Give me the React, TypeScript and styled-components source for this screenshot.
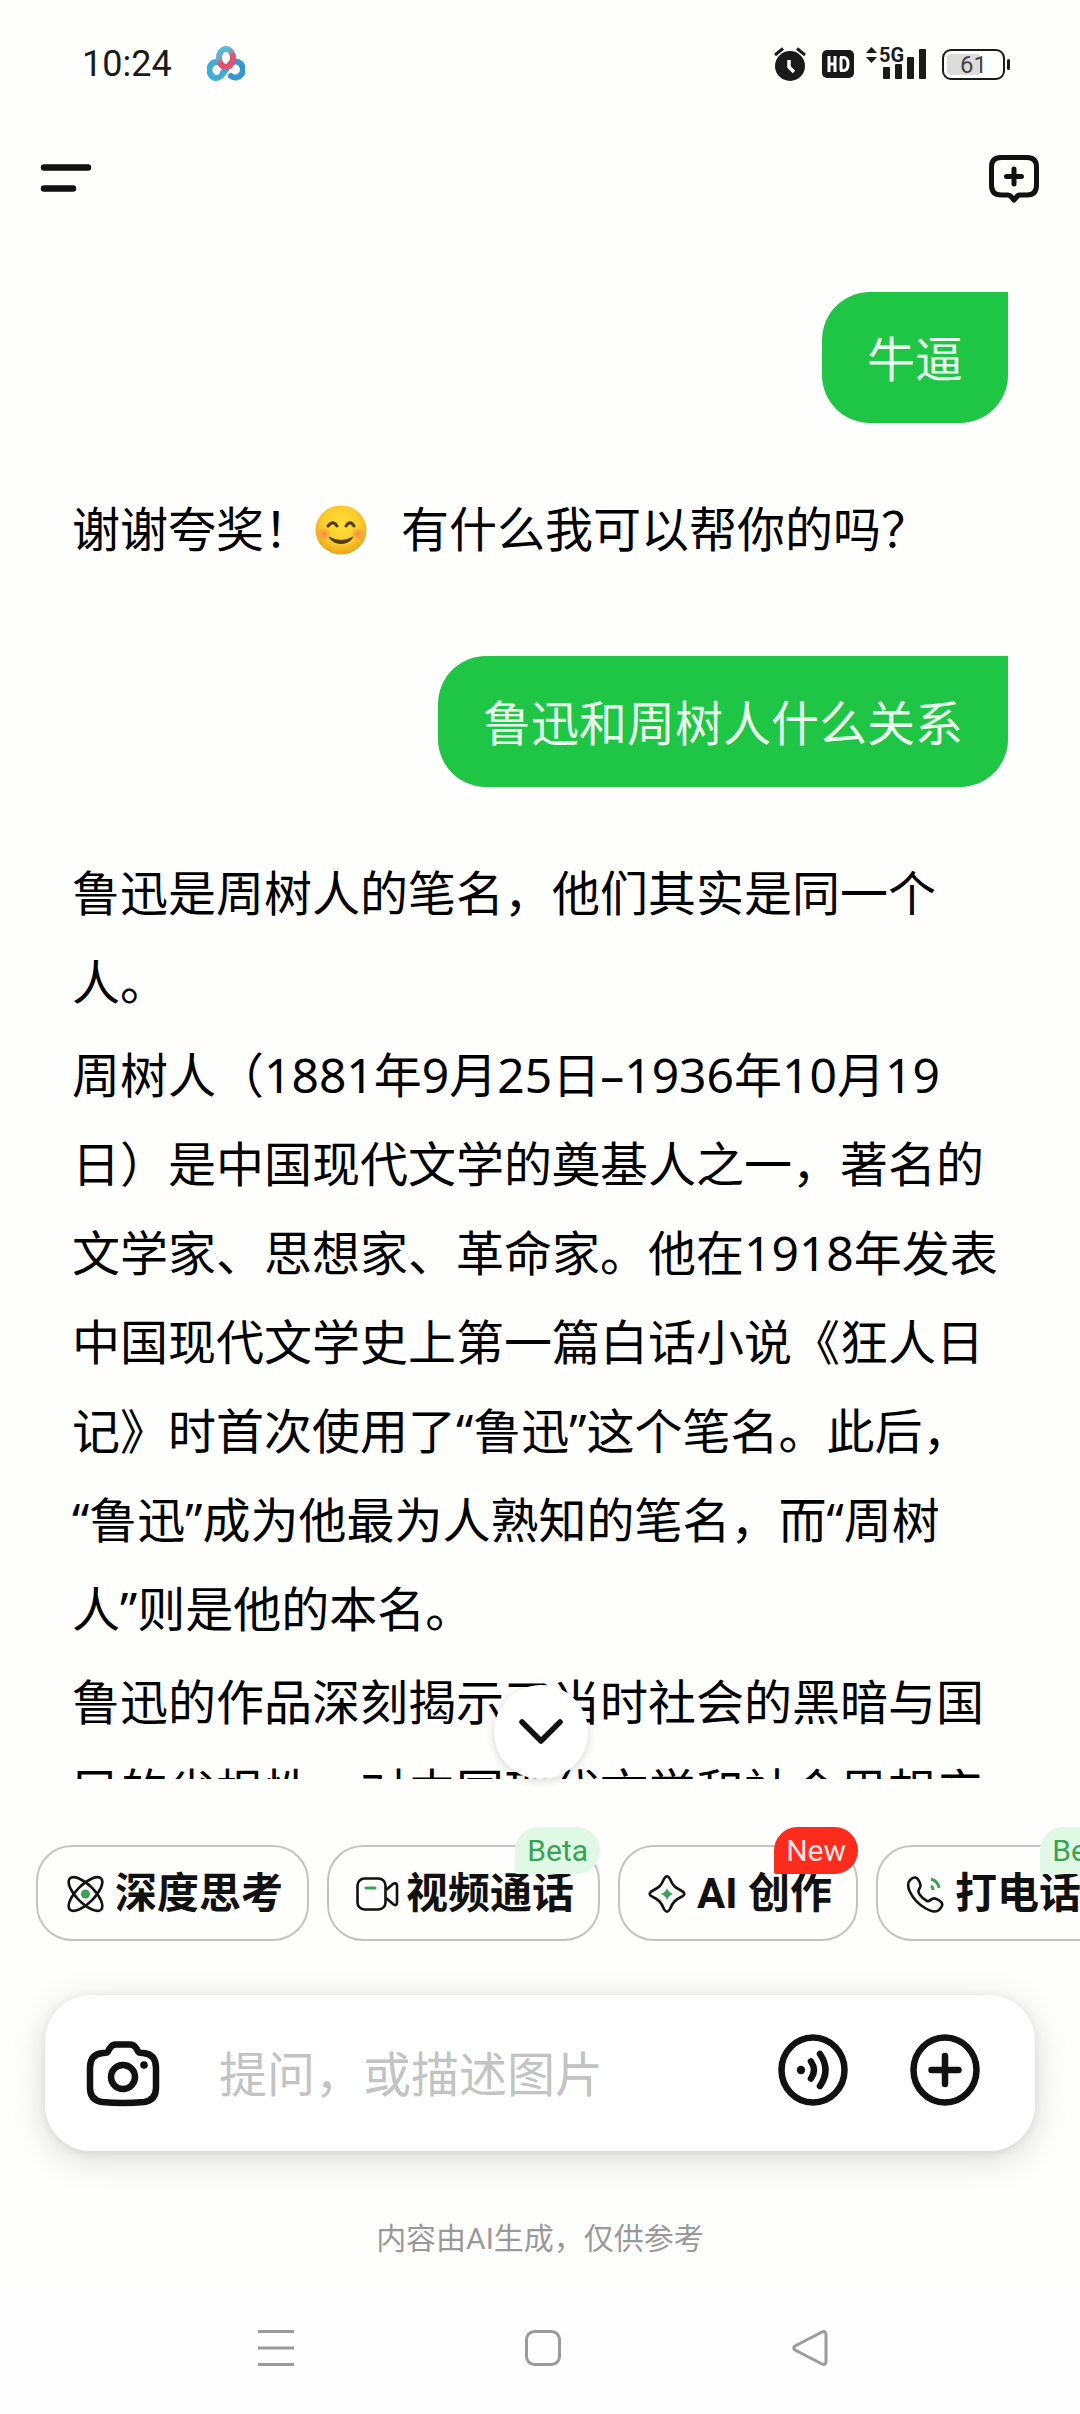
import React from "react";
import styled, { createGlobalStyle } from "styled-components";

const INK = "#111";
const GREEN = "#38a352";

const GlobalStyle = createGlobalStyle`
  *, *::before, *::after { box-sizing: border-box; }
  body {
    margin: 0;
    background: #fefefc;
    color: #000;
    font-family: "Noto Sans", "Noto Sans CJK SC", sans-serif;
    text-spacing-trim: space-all;
  }
  button, input { font: inherit; color: inherit; }
`;

const Page = styled.div`
  display: flex;
  flex-direction: column;
  height: 100vh;
  overflow: hidden;
`;

const StatusBar = styled.header`
  flex: none;
  display: flex;
  align-items: center;
  gap: 35px;
  height: 128px;
  padding: 0 70px 0 82px;
  color: #1a1a1a;
`;

const Clock = styled.time`
  font: 400 36px/48px Roboto, sans-serif;
`;

const StatusIcons = styled.div`
  display: flex;
  align-items: center;
  gap: 16px;
  margin-left: auto;
`;

const Toolbar = styled.nav`
  flex: none;
  display: flex;
  align-items: center;
  justify-content: space-between;
  height: 100px;
  padding: 0 40px;
`;

const IconButton = styled.button`
  flex: none;
  display: grid;
  place-items: center;
  padding: 0;
  border: 0;
  background: none;
  svg { display: block; }
`;

const ChatArea = styled.main`
  position: relative;
  flex: 1;
  min-height: 0;
  display: flex;
`;

const Messages = styled.div`
  flex: 1;
  display: flex;
  flex-direction: column;
  padding: 64px 72px 0;
  overflow: hidden;
`;

const UserBubble = styled.p`
  flex: none;
  align-self: flex-end;
  margin: 0;
  padding: 31px 45px 29px;
  border-radius: 48px 0 48px 48px;
  background: #1fc545;
  color: #e9fdec;
  font-size: 48px;
  line-height: 71px;
`;

const Reply = styled.div`
  flex: none;
  display: flex;
  flex-direction: column;
  gap: 4px;
  padding: 61px 0 83px;
`;

const Paragraph = styled.p`
  margin: 0;
  font-size: 48px;
  line-height: 89px;
`;

const Smile = styled.svg`
  width: 52px;
  height: 50px;
  margin: 0 34px 0 3px;
  vertical-align: -8px;
`;

const ScrollDown = styled.button`
  position: absolute;
  left: 50%;
  bottom: 0;
  display: grid;
  place-items: center;
  width: 94px;
  height: 94px;
  margin-left: -46px;
  padding: 0;
  border: 0;
  border-radius: 50%;
  background: #fff;
  box-shadow: 0 2px 10px rgba(0, 0, 0, 0.16);
`;

const Chips = styled.div`
  flex: none;
  display: flex;
  gap: 18px;
  padding: 66px 0 54px 36px;
  overflow: hidden;
`;

const Chip = styled.button<{ $minWidth?: number }>`
  position: relative;
  flex: none;
  display: flex;
  align-items: center;
  gap: 10px;
  height: 96px;
  min-width: ${(p) => p.$minWidth ?? 0}px;
  padding: 2px 24px 0 27px;
  border: 2px solid #c3c3c3;
  border-radius: 36px;
  background: none;
  color: ${INK};
  font: 700 42px/60px Roboto, "Noto Sans CJK SC", sans-serif;
  white-space: nowrap;
  svg { flex: none; width: 40px; height: 40px; overflow: visible; }
`;

const Badge = styled.span<{ $hot?: boolean }>`
  position: absolute;
  top: -20px;
  right: -2px;
  padding: 0 12px;
  border-radius: 24px 24px 24px 2px;
  background: ${(p) => (p.$hot ? "#fd2b1b" : "#e0f9e5")};
  color: ${(p) => (p.$hot ? "#ffe3e0" : GREEN)};
  font-size: 30px;
  font-weight: 400;
  line-height: 47px;
`;

const Composer = styled.form`
  flex: none;
  display: flex;
  align-items: center;
  height: 156px;
  margin: 0 45px;
  padding: 0 55px 0 40px;
  border-radius: 46px;
  background: #fff;
  box-shadow: 0 8px 36px rgba(0, 0, 0, 0.14), 0 2px 10px rgba(0, 0, 0, 0.08);
`;

const Prompt = styled.input`
  flex: 1;
  min-width: 0;
  height: 80px;
  margin-left: 58px;
  padding: 0;
  border: 0;
  outline: 0;
  background: none;
  font-size: 48px;
  &::placeholder { color: #c3c3c3; opacity: 1; }
`;

const Actions = styled.div`
  display: flex;
  gap: 62px;
  padding-bottom: 6px;
`;

const Disclaimer = styled.p`
  flex: none;
  margin: 0;
  padding: 66px 0 23px;
  color: #999;
  font: 400 30px/44px Roboto, "Noto Sans CJK SC", sans-serif;
  text-align: center;
`;

const SystemNav = styled.nav`
  flex: none;
  display: grid;
  grid-template-columns: repeat(3, 1fr);
  height: 130px;
  padding: 0 136px 2px 142px;
  background: #fefefe;
`;

function CloudIcon() {
  return (
    <svg width="38" height="38" viewBox="0 0 38 38" fill="none" strokeWidth="6">
      <defs>
        <linearGradient id="ring" x1="0" y1="0" x2="0.5" y2="1">
          <stop offset="0" stopColor="#49c3e3" />
          <stop offset="0.45" stopColor="#7aa3c8" />
          <stop offset="0.65" stopColor="#e0526f" />
        </linearGradient>
      </defs>
      <path d="M20 23 L14 31 A7 8 0 1 1 14 19" stroke="#41acd6" />
      <path d="M23 19 A7.500 8 0 1 1 24 31" stroke="#3597cd" strokeLinecap="round" />
      <path d="M20 23 L15 29" stroke="#41a9d8" />
      <ellipse cx="19" cy="13" rx="7" ry="9" stroke="url(#ring)" />
    </svg>
  );
}

function AlarmIcon() {
  return (
    <svg width="32" height="34" viewBox="0 0 32 34">
      <circle cx="16" cy="19" r="15" fill="#1a1a1a" />
      <path d="M1 8 L9 1.500 M31 8 L23 1.500" stroke="#1a1a1a" strokeWidth="3" />
      <path d="M15 13 V20 L20 25" fill="none" stroke="#fff" strokeWidth="3.500" />
    </svg>
  );
}

function HdIcon() {
  return (
    <svg width="32" height="28" viewBox="0 0 32 28">
      <rect width="32" height="28" rx="5" fill="#1a1a1a" />
      <path
        d="M7 6 V22 M13 6 V22 M7 14 H13 M19 7.500 V20.500 M18 7.500 H22 Q26 8 26 14 Q26 20 22 20.500 H18"
        fill="none"
        stroke="#fff"
        strokeWidth="3"
      />
    </svg>
  );
}

const SignalGroup = styled.div`
  display: grid;
  grid-template-columns: 13px 47px;
  height: 34px;
  margin-left: -4px;
`;

const SignalStack = styled.div`
  position: relative;
  height: 34px;
  svg { display: block; }
`;

const Network = styled.span`
  position: absolute;
  left: 0;
  top: -2px;
  font: 700 20px/20px Roboto, sans-serif;
`;

function Signal() {
  return (
    <SignalGroup>
      <svg width="11" height="16" viewBox="0 0 11 16" fill="#1a1a1a">
        <path d="M5.500 0 L11 6 H0 Z M0 10 H11 L5.500 16 Z" />
      </svg>
      <SignalStack>
        <svg width="47" height="34" viewBox="0 0 47 34" fill="#1a1a1a">
          <rect x="4" y="20" width="7" height="12" rx="1" />
          <rect x="16" y="17" width="7" height="15" rx="1" />
          <rect x="28" y="10" width="7" height="22" rx="1" />
          <rect x="40" y="2" width="7" height="30" rx="1" />
        </svg>
        <Network>5G</Network>
      </SignalStack>
    </SignalGroup>
  );
}

const BatteryShell = styled.div`
  display: flex;
  align-items: center;
  gap: 2px;
  &::after {
    content: "";
    width: 3px;
    height: 11px;
    border-radius: 2px;
    background: #1a1a1a;
  }
`;

const BatteryBody = styled.span`
  width: 63px;
  height: 31px;
  padding: 3px;
  border: 2px solid #1a1a1a;
  border-radius: 9px;
  background: linear-gradient(90deg, #dcdcdc 61%, transparent 61%) content-box;
  color: #444;
  font: 400 24px/22px Roboto, sans-serif;
  text-align: center;
`;

function ThinkIcon() {
  return (
    <svg viewBox="0 0 40 40" fill="none" stroke={INK} strokeWidth="2.600">
      <ellipse cx="20.500" cy="20" rx="22" ry="9" transform="rotate(45 20.500 20)" />
      <ellipse cx="20.500" cy="20" rx="22" ry="9" transform="rotate(-45 20.500 20)" />
      <circle cx="20.500" cy="20" r="4.500" fill={GREEN} stroke="none" />
    </svg>
  );
}

function VideoIcon() {
  return (
    <svg viewBox="0 0 40 40" fill="none" stroke={INK} strokeWidth="2.600">
      <rect x="1.500" y="4.500" width="28" height="31" rx="7" />
      <path d="M30 16 L37 10 Q41 8 41 12 V28 Q41 33 37 30 L30 24" strokeLinejoin="round" />
      <path d="M10 14 H19" stroke={GREEN} strokeWidth="3" strokeLinecap="round" />
    </svg>
  );
}

function SparkIcon() {
  return (
    <svg viewBox="0 0 40 40" fill="none">
      <path
        d="M17 5 Q20 -0.500 23 5 C26 12 28 13.500 34 16.500 Q40.500 20 34 23 C28 26 26 28 23 35 Q20 40.500 17 35 C14 28 12 26 6 23 Q-0.500 20 6 16.500 C12 13.500 14 12 17 5 Z"
        stroke={INK}
        strokeWidth="2.600"
      />
      <path d="M20 14 Q21.500 18.500 26 20 Q21.500 21.500 20 26 Q18.500 21.500 14 20 Q18.500 18.500 20 14 Z" fill={GREEN} />
    </svg>
  );
}

function PhoneIcon() {
  return (
    <svg viewBox="0 0 40 40" fill="none" stroke={INK} strokeWidth="2.600" strokeLinejoin="round">
      <path d="M5 6 C9 2 12 3 14 7 C16 11 16 12 14.500 14.500 C13 17 13 18 15 21 C17 24 19 25.500 22 27 C24 28 25 26 27 25 C30 23.500 32 25 35 27 C39 30 37 33 34 36 C31 38.500 25 37 20 34 C13 30 8 24 5 18 C2.500 13 2.500 9 5 6 Z" />
      <path d="M26 5 Q33 7 34 14 M26 12 Q28 13 28 16" stroke={GREEN} strokeWidth="3" />
    </svg>
  );
}

const chips = [
  { label: "深度思考", icon: <ThinkIcon /> },
  { label: "视频通话", icon: <VideoIcon />, badge: "Beta" },
  { label: "AI 创作", icon: <SparkIcon />, badge: "New" },
  { label: "打电话", icon: <PhoneIcon />, badge: "Beta", minWidth: 249 },
];

export default function App() {
  return (
    <Page>
      <GlobalStyle />
      <StatusBar>
        <Clock>10:24</Clock>
        <CloudIcon />
        <StatusIcons>
          <AlarmIcon />
          <HdIcon />
          <Signal />
          <BatteryShell>
            <BatteryBody>61</BatteryBody>
          </BatteryShell>
        </StatusIcons>
      </StatusBar>

      <Toolbar>
        <IconButton aria-label="菜单">
          <svg width="52" height="28" viewBox="0 0 52 28" stroke={INK} strokeWidth="6.500" strokeLinecap="round">
            <path d="M4 3.500 H48 M4 24.500 H33" />
          </svg>
        </IconButton>
        <IconButton aria-label="新对话">
          <svg width="52" height="52" viewBox="0 0 52 52" fill="none" stroke={INK} strokeWidth="5" strokeLinecap="round" strokeLinejoin="round">
            <path d="M13 5.500 H39 Q48.500 5.500 48.500 15 V33 Q48.500 43 39 43 H32 Q30 43 29 44.500 L26 48 L23 44.500 Q22 43 20 43 H13 Q3.500 43 3.500 33 V15 Q3.500 5.500 13 5.500 Z" />
            <path d="M26 17 V32 M18.500 24.500 H33.500" />
          </svg>
        </IconButton>
      </Toolbar>

      <ChatArea>
        <Messages>
          <UserBubble>牛逼</UserBubble>
          <Reply>
            <Paragraph>
              谢谢夸奖！
              <Smile viewBox="0 0 52 50" role="img" aria-label="微笑">
                <defs>
                  <radialGradient id="face" cx="0.5" cy="0.4" r="0.6">
                    <stop offset="0" stopColor="#ffdf35" />
                    <stop offset="0.6" stopColor="#fbcd2c" />
                    <stop offset="1" stopColor="#e9a41f" />
                  </radialGradient>
                  <radialGradient id="blush">
                    <stop offset="0" stopColor="#f58a4b" />
                    <stop offset="1" stopColor="#f58a4b" stopOpacity="0" />
                  </radialGradient>
                </defs>
                <ellipse cx="26" cy="25" rx="25.500" ry="24.500" fill="url(#face)" />
                <circle cx="9" cy="29" r="7" fill="url(#blush)" />
                <circle cx="43" cy="29" r="7" fill="url(#blush)" />
                <path d="M13 21 Q18 14.500 22 21 M31 21 Q35 14.500 39 21" fill="none" stroke="#4f3b10" strokeWidth="3" strokeLinecap="round" />
                <path d="M14 32 Q26 39 38 32 Q34 38.500 26 38.500 Q18 38.500 14 32 Z" fill="#4f3b10" stroke="#4f3b10" strokeLinejoin="round" />
              </Smile>
              有什么我可以帮你的吗？
            </Paragraph>
          </Reply>
          <UserBubble>鲁迅和周树人什么关系</UserBubble>
          <Reply>
            <Paragraph>鲁迅是周树人的笔名，他们其实是同一个人。</Paragraph>
            <Paragraph>
              周树人（1881年9月25日–1936年10月19日）是中国现代文学的奠基人之一，著名的文学家、思想家、革命家。他在1918年发表中国现代文学史上第一篇白话小说《狂人日记》时首次使用了“鲁迅”这个笔名。此后，
              <wbr />
              “鲁迅”成为他最为人熟知的笔名，而“周树
              <wbr />
              人”则是他的本名。
            </Paragraph>
            <Paragraph>鲁迅的作品深刻揭示了当时社会的黑暗与国民的劣根性，对中国现代文学和社会思想产</Paragraph>
          </Reply>
        </Messages>
        <ScrollDown aria-label="滚动到底部">
          <svg width="46" height="30" viewBox="0 0 46 30" fill="none" stroke={INK} strokeWidth="5.500" strokeLinecap="round" strokeLinejoin="round">
            <path d="M4 5 L23 24 L42 5" />
          </svg>
        </ScrollDown>
      </ChatArea>

      <Chips>
        {chips.map((c) => (
          <Chip key={c.label} type="button" $minWidth={c.minWidth}>
            {c.icon}
            {c.label}
            {c.badge && <Badge $hot={c.badge === "New"}>{c.badge}</Badge>}
          </Chip>
        ))}
      </Chips>

      <Composer>
        <IconButton type="button" aria-label="拍照">
          <svg width="76" height="70" viewBox="0 0 76 70" fill="none" stroke={INK} strokeWidth="6.500" strokeLinejoin="round">
            <path d="M18 15 C24 15 22 14 25 10 Q27 6.500 31 6.500 H45 Q49 6.500 51 10 C54 14 52 15 58 15 Q71 16 71 30 V50 Q71 62 59 64 Q38 66 17 64 Q5 62 5 50 V30 Q5 16 18 15 Z" />
            <circle cx="38" cy="39" r="12" />
            <circle cx="59" cy="27" r="3.800" fill={INK} stroke="none" />
          </svg>
        </IconButton>
        <Prompt aria-label="提问" placeholder="提问，或描述图片" />
        <Actions>
          <IconButton type="button" aria-label="语音">
            <svg width="70" height="72" viewBox="0 0 70 72" fill="none" stroke={INK} strokeWidth="6.500" strokeLinecap="round">
              <ellipse cx="35" cy="36" rx="31.500" ry="32.500" />
              <circle cx="23" cy="36" r="4.200" fill={INK} stroke="none" />
              <path d="M33 27.500 Q39 36 33 44.500 M42 20 Q53 36 42 52" />
            </svg>
          </IconButton>
          <IconButton type="button" aria-label="更多">
            <svg width="70" height="72" viewBox="0 0 70 72" fill="none" stroke={INK} strokeWidth="6.500" strokeLinecap="round">
              <ellipse cx="35" cy="36" rx="31.500" ry="32.500" />
              <path d="M35 22 V50 M21.500 36 H48.500" />
            </svg>
          </IconButton>
        </Actions>
      </Composer>

      <Disclaimer>内容由AI生成，仅供参考</Disclaimer>

      <SystemNav>
        <IconButton aria-label="最近任务">
          <svg width="36" height="36" viewBox="0 0 36 36" stroke="#9b9b9b" strokeWidth="3">
            <path d="M0 1.500 H36 M0 18 H36 M0 34.500 H36" />
          </svg>
        </IconButton>
        <IconButton aria-label="主页">
          <svg width="36" height="36" viewBox="0 0 36 36" fill="none" stroke="#9b9b9b" strokeWidth="3">
            <rect x="1.500" y="1.500" width="33" height="33" rx="8" />
          </svg>
        </IconButton>
        <IconButton aria-label="返回">
          <svg width="36" height="36" viewBox="0 0 36 36" fill="none" stroke="#9b9b9b" strokeWidth="3" strokeLinejoin="round">
            <path d="M3 16 L30 2 Q34 0.500 34 5 V31 Q34 35.500 30 34 L3 20 Q0.500 18 3 16 Z" />
          </svg>
        </IconButton>
      </SystemNav>
    </Page>
  );
}
